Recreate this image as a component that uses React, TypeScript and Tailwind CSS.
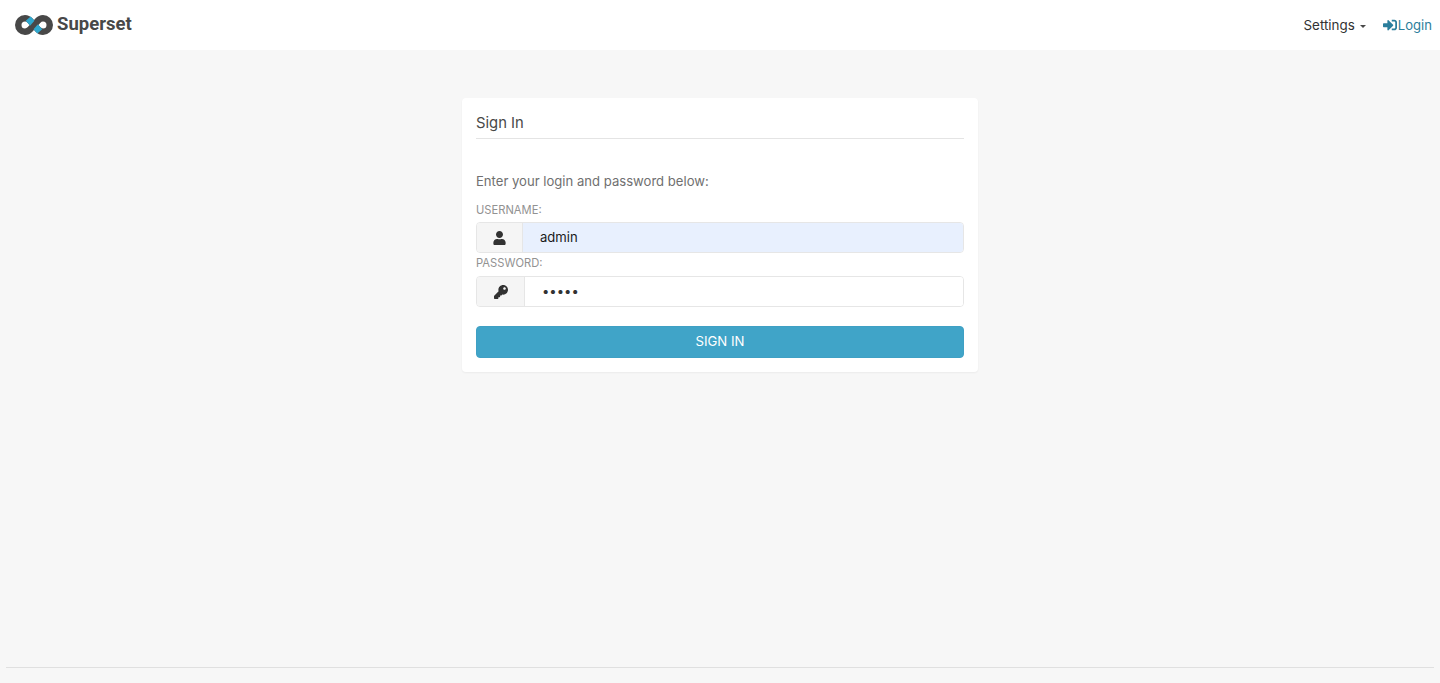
import React from 'react';
import { FaKey, FaSignInAlt, FaUser } from 'react-icons/fa';

const Logo = () => (
  <svg width="38" height="20" viewBox="0 0 38 20" fill="none">
    <path
      d="M10 3.25a6.75 6.75 0 1 0 0 13.5c2.5 0 4-1.2 5.2-2.5l7.6-8.5c1.2-1.3 2.7-2.5 5.2-2.5a6.75 6.75 0 1 1 0 13.5c-2.5 0-4-1.2-5.2-2.5L15.2 5.75C14 4.45 12.5 3.25 10 3.25Z"
      stroke="#484848"
      strokeWidth="6.5"
    />
    <path d="M13.2 3.6 18 9M20 11l4.8 5.4" stroke="#2fa8cf" strokeWidth="6.5" />
    <path d="M15.6 13.8 22.4 6.2" stroke="#484848" strokeWidth="5" />
  </svg>
);

const App = () => {
  return (
    <div className="min-h-screen bg-[#f7f7f7] text-[#484848] font-['Inter',sans-serif] flex flex-col">
      <nav className="h-[50px] bg-white flex items-center justify-between pl-[15px] pr-2">
        <div className="flex items-center gap-[4px]">
          <Logo />
          <span className="font-['Roboto',sans-serif] font-bold text-[18.5px] text-[#484848]">Superset</span>
        </div>
        <div className="flex items-center gap-[17px] text-[13.4px]">
          <div className="flex items-center gap-[5px] text-[#323232]">
            <span>Settings</span>
            <span className="mt-[3px] border-x-[3px] border-t-[3px] border-x-transparent border-t-[#484848]"></span>
          </div>
          <a className="flex items-center text-[#2b7e9c] text-[13.1px]">
            <FaSignInAlt className="w-[14px] h-[14px] mr-[1px]" />
            <span className="pt-[1px]">Login</span>
          </a>
        </div>
      </nav>

      <main className="flex-1 flex flex-col items-center pt-12">
        <div className="w-[516px] h-[274px] bg-white rounded-[4px] shadow-[0_1px_2px_rgba(0,0,0,0.05)] px-[14px] pt-[14px]">
          <h1 className="text-[14.8px] text-[#484848] leading-5 pt-[1px] pb-[5px] h-[27px] border-b border-[#e4e4e4]">Sign In</h1>
          <p className="mt-[32px] text-[13.1px] leading-5 text-[#707070]">Enter your login and password below:</p>
          <label className="block mt-[12px] text-[11.2px] leading-[15px] text-[#929292]">USERNAME:</label>
          <div className="mt-[4px] h-[31px] flex rounded-[4px] border border-[#e6e6e6] overflow-hidden">
            <div className="w-[46px] bg-[#f5f5f5] border-r border-[#e6e6e6] flex items-center justify-center text-[#323232]">
              <FaUser className="w-[13px] h-[14px]" />
            </div>
            <input readOnly value="admin" className="flex-1 bg-[#e8f0fe] pl-[17px] pt-[1px] text-[13.1px] text-[#1a1a1a] outline-none" />
          </div>
          <label className="block mt-[3px] text-[11.2px] leading-[15px] text-[#929292]">PASSWORD:</label>
          <div className="mt-[5px] h-[31px] flex rounded-[4px] border border-[#e6e6e6] overflow-hidden">
            <div className="w-[48px] bg-[#f5f5f5] border-r border-[#e6e6e6] flex items-center justify-center text-[#323232]">
              <FaKey className="w-[14px] h-[14px]" />
            </div>
            <input readOnly type="password" value="admin" className="flex-1 bg-white pl-[17px] text-[13.1px] text-[#323232] outline-none" />
          </div>
          <button className="mt-[19px] w-full h-[32px] rounded-[4px] border border-[#3fa0c4] bg-[#40a4c8] text-white text-[13.2px] flex items-center justify-center">SIGN IN</button>
        </div>
      </main>

      <footer className="px-[6px] h-[16px]">
        <div className="border-t border-[#e0e0e0]"></div>
      </footer>
    </div>
  );
};

export default App;
